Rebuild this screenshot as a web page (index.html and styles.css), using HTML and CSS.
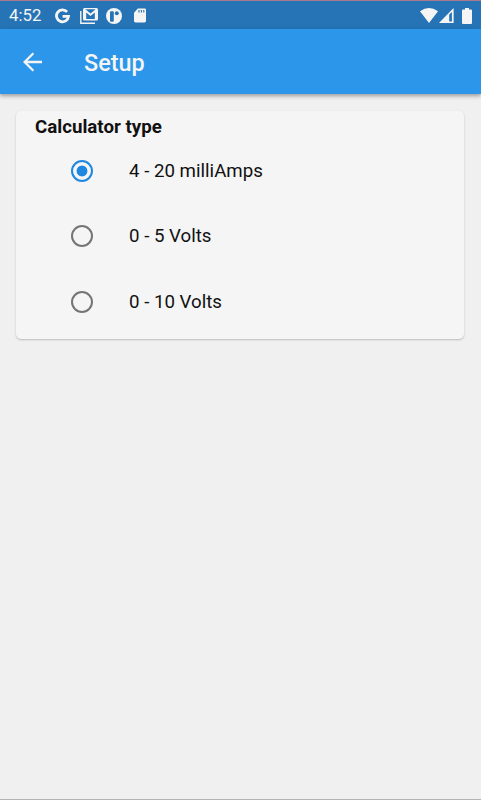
FILE: index.html
```html
<!DOCTYPE html>
<html lang="en">
<head>
  <meta charset="UTF-8" />
  <meta name="viewport" content="width=device-width, initial-scale=1.0"/>
  <title>Setup</title>
  <link rel="stylesheet" href="styles.css">
</head>
<body>
  <div class="status-bar">
    <span class="clock">4:52</span>
    <div class="notifications">
      <svg width="15" height="16" viewBox="0 0 15 16">
        <path d="M12.1 3.9A6 6 0 1 0 13.5 8.4H7.6" fill="none" stroke="#f5f5f5" stroke-width="2.8"/>
      </svg>
      <svg class="mail" width="18" height="16" viewBox="0 0 18 16">
        <path d="M.8 3v12.2H15" fill="none" stroke="#f5f5f5" stroke-width="1.4"/>
        <path d="M4.5 0H16.5Q18 0 18 1.5V11Q18 12.5 16.5 12.5H4.5Q3 12.5 3 11V1.5Q3 0 4.5 0Z" fill="#f5f5f5"/>
        <path d="M6.2 11V4.6L10.5 8.1L14.8 4.6V11Z" fill="#2674b5"/>
        <path d="M5.4 1.3H15.6L10.5 5.4Z" fill="#2674b5"/>
      </svg>
      <svg class="pocket" width="16" height="16" viewBox="0 0 16 16">
        <circle cx="8" cy="8" r="8" fill="#f5f5f5"/>
        <rect x="4" y="3.2" width="3.8" height="10.6" rx="1" fill="#2674b5"/>
        <circle cx="10.8" cy="5.2" r="2" fill="#2674b5"/>
      </svg>
      <svg class="sd" width="12" height="15" viewBox="0 0 13 15">
        <path d="M4.2 0H11.5Q13 0 13 1.5V13.3Q13 15 11.5 15H1.5Q0 15 0 13.3V4.4Z" fill="#f5f5f5"/>
        <path d="M5.4 1.6v2.7M8 1.6v2.7M10.6 1.6v2.7" stroke="#2674b5" stroke-width="1.2"/>
      </svg>
    </div>
    <div class="system">
      <svg class="wifi" width="18" height="15" viewBox="0 0 18 15">
        <path d="M0 3.3Q9-3.3 18 3.3L9 15Z" fill="#f5f5f5"/>
      </svg>
      <svg class="signal" width="15" height="15" viewBox="0 0 15 15">
        <path d="M0 15L14.6 0V15Z" fill="#f5f5f5"/>
        <path d="M10.2 13.4V6.4L12.9 4V13.4Z" fill="#2674b5"/>
      </svg>
      <svg class="battery" width="10" height="16" viewBox="0 0 10 16">
        <path d="M3 0H7V1.6H9Q10 1.6 10 2.6V15Q10 16 9 16H1Q0 16 0 15V2.6Q0 1.6 1 1.6H3Z" fill="#f5f5f5"/>
      </svg>
    </div>
  </div>

  <header class="app-bar">
    <svg class="back" width="20" height="20" viewBox="0 0 20 20">
      <path d="M19 10H2M10.4 1.2L1.6 10L10.4 18.8" fill="none" stroke="#f5f5f5" stroke-width="2.3"/>
    </svg>
    <h1>Setup</h1>
  </header>

  <form class="card">
    <h2>Calculator type</h2>
    <label class="option">
      <input type="radio" name="type" value="4-20ma" checked>
      <span>4 - 20 milliAmps</span>
    </label>
    <label class="option">
      <input type="radio" name="type" value="0-5v">
      <span>0 - 5 Volts</span>
    </label>
    <label class="option">
      <input type="radio" name="type" value="0-10v">
      <span>0 - 10 Volts</span>
    </label>
  </form>
</body>
</html>
```

FILE: styles.css
```css
* {
  box-sizing: border-box;
}

body {
  display: flex;
  flex-direction: column;
  height: 100vh;
  margin: 0;
  background: #f0f0f0;
  border-bottom: 1px solid #b4b4b4;
  color: #111;
  font-family: Roboto, sans-serif;
}

.status-bar {
  display: flex;
  align-items: center;
  flex: none;
  height: 29px;
  padding: 1px 9px 0;
  background: #2674b5;
  border-top: 1px solid #a8788c;
  color: #f5f5f5;
}

.clock {
  width: 46px;
  font-size: 16.8px;
  line-height: 27px;
}

.notifications {
  display: flex;
  align-items: center;
}

.mail {
  margin-left: 10px;
}

.pocket {
  margin-left: 8px;
}

.sd {
  margin-left: 12px;
}

.system {
  display: flex;
  align-items: center;
  margin-left: auto;
}

.signal {
  margin-left: 1px;
}

.battery {
  margin-left: 8px;
}

svg {
  display: block;
}

.app-bar {
  display: flex;
  align-items: center;
  flex: none;
  height: 65px;
  padding-left: 23px;
  background: #2b96ea;
  box-shadow: 0 2px 4px rgba(0, 0, 0, 0.35);
  color: #f5f5f5;
}

.app-bar h1 {
  margin: 0 0 0 41px;
  padding-top: 2px;
  font-size: 23.4px;
  font-weight: 500;
}

.card {
  height: 228px;
  margin: 17px 17px 0 16px;
  background: #f5f5f5;
  border-radius: 5px;
  box-shadow: 0 1px 2px rgba(0, 0, 0, 0.22);
}

.card h2 {
  margin: 0;
  padding: 5px 0 0 19px;
  font-size: 18.7px;
  font-weight: 700;
  line-height: 22px;
}

.option {
  display: flex;
  align-items: center;
  height: 65.5px;
  padding-left: 55px;
  font-size: 18.7px;
}

.card h2 + .option {
  margin-top: -0.2px;
}

.option span {
  padding-top: 0.6px;
}

.option input {
  appearance: none;
  width: 22px;
  height: 22px;
  margin: 0 36px 0 0;
  border: 2.2px solid #757575;
  border-radius: 50%;
}

.option input:checked {
  border-color: #1e88e0;
  background: radial-gradient(circle, #1e88e0 5px, transparent 5.8px);
}
```
